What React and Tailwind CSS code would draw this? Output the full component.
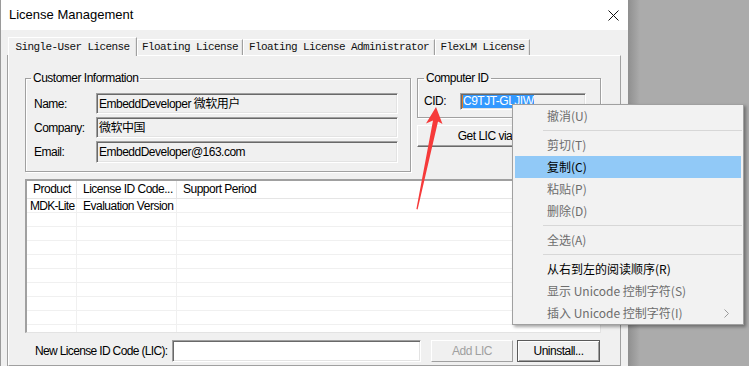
const ui = "font-['Liberation_Sans','Noto_Sans_CJK_SC',sans-serif] text-[12px] tracking-[-0.5px]"
const sunken =
  'border border-t-[#a0a0a0] border-l-[#a0a0a0] border-b-white border-r-white shadow-[inset_1px_1px_0_#696969,inset_-1px_-1px_0_#e3e3e3]'
const etched = 'border border-[#a0a0a0] shadow-[inset_1px_1px_0_#fff,1px_1px_0_#fff]'

const tabs = [
  { label: 'Single-User License', w: 'w-[129px]', active: true },
  { label: 'Floating License', w: 'w-[106px]' },
  { label: 'Floating License Administrator', w: 'w-[192px]' },
  { label: 'FlexLM License', w: 'w-[95px]' },
]

const fields = [
  { label: 'Name:', value: 'EmbeddDeveloper 微软用户', h: 'h-[21px]' },
  { label: 'Company:', value: '微软中国', h: 'h-[21px]' },
  { label: 'Email:', value: 'EmbeddDeveloper@163.com', h: 'h-[22px]' },
]

const menu = [
  { label: '撤消(U)', disabled: true },
  { sep: true },
  { label: '剪切(T)', disabled: true },
  { label: '复制(C)', active: true },
  { label: '粘贴(P)', disabled: true },
  { label: '删除(D)', disabled: true },
  { sep: true },
  { label: '全选(A)', disabled: true },
  { sep: true },
  { label: '从右到左的阅读顺序(R)' },
  { label: '显示 Unicode 控制字符(S)', disabled: true },
  { label: '插入 Unicode 控制字符(I)', disabled: true, sub: true },
]

const Fieldset = ({ title, legendClass, className, children }) => (
  <fieldset className={`${etched} ${className}`}>
    <legend className={`${legendClass} px-[2px] leading-[14px] text-black`}>{title}</legend>
    {children}
  </fieldset>
)

const Tab = ({ label, w, active }) => (
  <div
    className={`${w} flex justify-center border-t border-l border-white border-r border-r-[#a0a0a0] shadow-[inset_-1px_0_0_#e3e3e3] bg-[#f0f0f0] ${
      active ? 'h-[19px] pt-[2px] -mb-px relative z-10' : 'h-[16px] pt-0'
    }`}
  >
    <span className="font-['Liberation_Mono',monospace] text-[11px] leading-[14px] tracking-[-0.6px] text-[#111]">{label}</span>
  </div>
)

const ContextMenu = () => (
  <div className="absolute left-[512px] top-[104px] w-[232px] border border-[#a0a0a0] bg-[#f2f2f2] shadow-[2px_2px_3px_rgba(0,0,0,0.35)] font-['Noto_Sans_CJK_SC',sans-serif] text-[12px] tracking-normal">
    {menu.map((item, i) =>
      item.sep ? (
        <div key={i} className="h-[7px] flex items-center pl-[30px] pr-px">
          <div className="h-px w-full bg-[#d7d7d7]" />
        </div>
      ) : (
        <div
          key={i}
          className={`h-[22px] mx-[2px] pl-[32px] pr-[10px] flex items-center justify-between ${
            item.active ? 'bg-[#91c9f7]' : ''
          } ${item.disabled ? 'text-[#6d6d6d]' : 'text-black'}`}
        >
          <span>{item.label}</span>
          {item.sub && (
            <svg width="5" height="9" viewBox="0 0 5 9" className="mr-[2px]">
              <polyline points="0.5,0.5 4.5,4.5 0.5,8.5" fill="none" stroke="#9a9a9a" strokeWidth="1" />
            </svg>
          )}
        </div>
      )
    )}
  </div>
)

const RedArrow = () => (
  <svg className="absolute left-0 top-0 pointer-events-none" width="749" height="366">
    <polygon
      points="436,107 442.5,124 438,121.5 417.6,209.5 416.4,209 433,120.5 426,123.5"
      fill="#f63a3a"
    />
  </svg>
)

export default function App() {
  return (
    <div className={`relative w-[749px] h-[366px] overflow-hidden flex bg-[#ababab] ${ui}`}>
      {/* dialog window */}
      <div className="w-[628px] shrink-0 flex flex-col border-l border-[#9a9a9a] bg-[#f0f0f0]">
        <div className="h-[30px] shrink-0 bg-white flex items-center justify-between pl-[8px] pr-[9px]">
          <span className="text-[13px] tracking-normal text-black">License Management</span>
          <svg width="11" height="11" viewBox="0 0 11 11">
            <path d="M0.5 0.5 L10.5 10.5 M10.5 0.5 L0.5 10.5" stroke="#111" strokeWidth="1" />
          </svg>
        </div>

        <div className="flex-1 flex flex-col pt-[7px] pl-[7px] pr-[7px]">
          <div className="flex items-end h-[18px]">
            {tabs.map((t) => (
              <Tab key={t.label} {...t} />
            ))}
          </div>

          <div className="flex-1 border border-[#a0a0a0] border-t-white border-l-white shadow-[-1px_0_0_#a0a0a0] pt-[15px] pl-[16px]">
            <div className="flex gap-[6px]">
              <Fieldset
                title="Customer Information"
                legendClass="-ml-[3px]"
                className="w-[386px] pt-[8px] pb-[8px] pl-[8px] pr-[12px]"
              >
                <div className="flex flex-col gap-[3px]">
                  {fields.map((f) => (
                    <div key={f.label} className="flex items-center">
                      <span className="w-[62px] shrink-0 text-black">{f.label}</span>
                      <div className={`flex-1 ${f.h} ${sunken} bg-[#f0f0f0] flex items-center pl-[2px] text-black`}>
                        {f.value}
                      </div>
                    </div>
                  ))}
                </div>
              </Fieldset>

              <div className="w-[184px] flex flex-col gap-[7px]">
                <Fieldset title="Computer ID" legendClass="ml-0" className="pt-[7px] pb-[7px] pl-[6px] pr-[14px]">
                  <div className="flex items-center">
                    <span className="w-[36px] shrink-0 text-black">CID:</span>
                    <div className={`flex-1 h-[17px] ${sunken} bg-[#f0f0f0] flex items-center pl-[1px] overflow-hidden`}>
                      <span className="border-l border-[#e8781e] bg-[#3399ff] text-white leading-[13px] whitespace-nowrap">C9TJT-GLJIW</span>
                    </div>
                  </div>
                </Fieldset>
                <button className="h-[22px] border border-t-white border-l-white border-b-[#696969] border-r-[#696969] shadow-[inset_-1px_-1px_0_#a0a0a0] bg-[#f0f0f0] text-black whitespace-nowrap">
                  Get LIC via Internet...
                </button>
              </div>
            </div>

            {/* license list */}
            <div className="mt-[7px] w-[576px] h-[154px] border-t-2 border-l-2 border-t-[#a0a0a0] border-l-[#a0a0a0] border-b border-r border-b-[#e3e3e3] border-r-[#e3e3e3] bg-white overflow-hidden text-black">
              <div className="h-[18px] flex border-b border-[#e5e5e5]">
                <div className="w-[50px] shrink-0 border-r border-[#e5e5e5] pl-[6px] leading-[16px]">Product</div>
                <div className="w-[100px] shrink-0 border-r border-[#e5e5e5] pl-[6px] leading-[16px]">License ID Code...</div>
                <div className="flex-1 pl-[6px] leading-[16px]">Support Period</div>
              </div>
              {Array.from({ length: 10 }).map((_, i) => (
                <div key={i} className="h-[14px] flex border-b border-[#f0f0f0]">
                  <div className="w-[50px] shrink-0 border-r border-[#f0f0f0] pl-[3px] tracking-[-0.7px] leading-[14px] whitespace-nowrap overflow-hidden">
                    {i === 0 ? 'MDK-Lite' : ''}
                  </div>
                  <div className="w-[100px] shrink-0 border-r border-[#f0f0f0] pl-[6px] leading-[14px] whitespace-nowrap">
                    {i === 0 ? 'Evaluation Version' : ''}
                  </div>
                  <div className="flex-1" />
                </div>
              ))}
            </div>

            {/* bottom row */}
            <div className="mt-[7px] flex items-center h-[22px]">
              <span className="w-[147px] shrink-0 pl-[10px] tracking-[-0.65px] text-black whitespace-nowrap">
                New License ID Code (LIC):
              </span>
              <div className={`w-[249px] h-[22px] ${sunken} bg-white`} />
              <button className="ml-[10px] w-[82px] h-[22px] border border-t-white border-l-white border-b-[#a0a0a0] border-r-[#a0a0a0] bg-[#f0f0f0] text-[#a0a0a0]">
                Add LIC
              </button>
              <button className="ml-[4px] w-[83px] h-[22px] border border-[#5a5a5a] shadow-[inset_1px_1px_0_#fff,inset_-1px_-1px_0_#a0a0a0] bg-[#f0f0f0] text-black">
                Uninstall...
              </button>
            </div>
          </div>
        </div>
      </div>

      {/* desktop behind */}
      <div className="flex-1 bg-[linear-gradient(to_right,#8f8f8f,#ababab_12px)]" />

      <RedArrow />
      <ContextMenu />
    </div>
  )
}
